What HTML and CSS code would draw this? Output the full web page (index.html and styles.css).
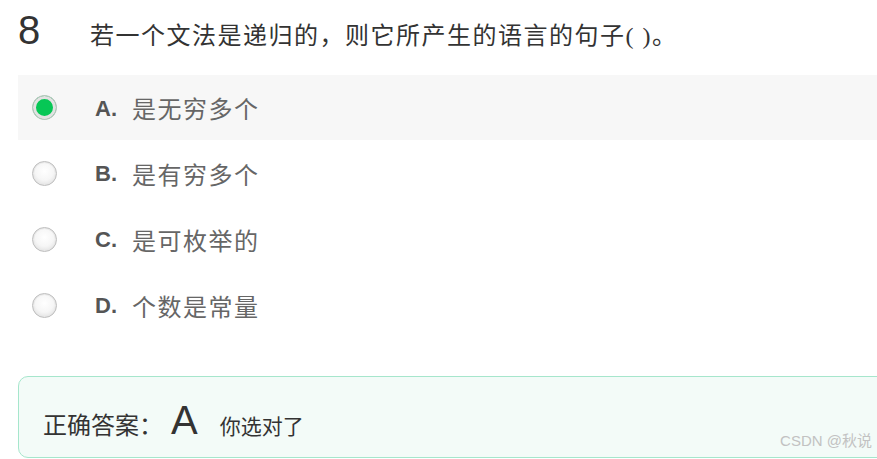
FILE: index.html
```html
<!DOCTYPE html>
<html lang="zh">
<head>
<meta charset="utf-8">
<title>题目</title>
<link rel="stylesheet" href="styles.css">
</head>
<body>
<div class="page">
  <div class="question">
    <span class="qnum">8</span>
    <span class="qtext">若一个文法是递归的，则它所产生的语言的句子( )。</span>
  </div>
  <ul class="options">
    <li class="option selected"><span class="radio"></span><span class="letter">A.</span><span class="otext">是无穷多个</span></li>
    <li class="option"><span class="radio"></span><span class="letter">B.</span><span class="otext">是有穷多个</span></li>
    <li class="option"><span class="radio"></span><span class="letter">C.</span><span class="otext">是可枚举的</span></li>
    <li class="option"><span class="radio"></span><span class="letter">D.</span><span class="otext">个数是常量</span></li>
  </ul>
  <div class="answer">
    <span class="alabel">正确答案：</span><span class="aletter">A</span><span class="aresult">你选对了</span>
    <span class="watermark">CSDN @秋说</span>
  </div>
</div>
</body>
</html>
```
FILE: styles.css
```css
html, body {
  margin: 0;
  padding: 0;
  background: #ffffff;
  overflow: hidden;
}
.page {
  width: 877px;
  height: 459px;
  position: relative;
  overflow: hidden;
  font-family: "Liberation Sans", "Noto Sans CJK SC", sans-serif;
}
.question {
  display: flex;
  align-items: baseline;
  padding: 10px 0 0 18px;
  height: 75px;
  box-sizing: border-box;
}
.qnum {
  font-size: 40px;
  line-height: 40px;
  color: #333333;
  width: 72px;
}
.qtext {
  font-family: "Liberation Serif", "Noto Sans CJK SC", serif;
  font-size: 24px;
  letter-spacing: 1.5px;
  color: #333333;
}
.options {
  list-style: none;
  margin: 0 0 0 18px;
  padding: 0;
}
.option {
  display: flex;
  align-items: center;
  height: 66px;
  padding-left: 14px;
}
.option.selected {
  height: 65px;
  background: #f7f7f7;
}
.radio {
  width: 25px;
  height: 25px;
  border-radius: 50%;
  box-sizing: border-box;
  border: 1px solid #bdbdbd;
  background: radial-gradient(circle at 50% 40%, #ffffff 0%, #f6f6f6 50%, #d6d6d6 100%);
  box-shadow: inset 0 0 0 1px #e8e8e8;
  flex: none;
  margin-right: 38px;
}
.option.selected .radio {
  border: 1px solid #c4c4c4;
  background: #06c755;
  box-shadow: inset 0 0 0 3px #e2e2e2;
}
.letter {
  font-weight: bold;
  font-size: 22px;
  color: #555555;
  width: 37px;
  line-height: 24px;
  padding-top: 2px;
}
.otext {
  font-size: 24px;
  color: #666666;
  letter-spacing: 1.5px;
}
.answer {
  position: relative;
  margin: 38px -20px 0 18px;
  height: 82px;
  box-sizing: border-box;
  border: 1px solid #a6e6cc;
  border-radius: 10px;
  background: #f3fbf8;
  display: flex;
  align-items: baseline;
  padding: 21px 0 0 24px;
}
.alabel {
  font-size: 24px;
  color: #333333;
}
.aletter {
  font-size: 40px;
  color: #333333;
  margin-left: 8px;
}
.aresult {
  font-size: 21px;
  color: #333333;
  margin-left: 22px;
}
.watermark {
  position: absolute;
  right: 24px;
  bottom: 7px;
  font-size: 15px;
  color: #c2c2c2;
}
```
